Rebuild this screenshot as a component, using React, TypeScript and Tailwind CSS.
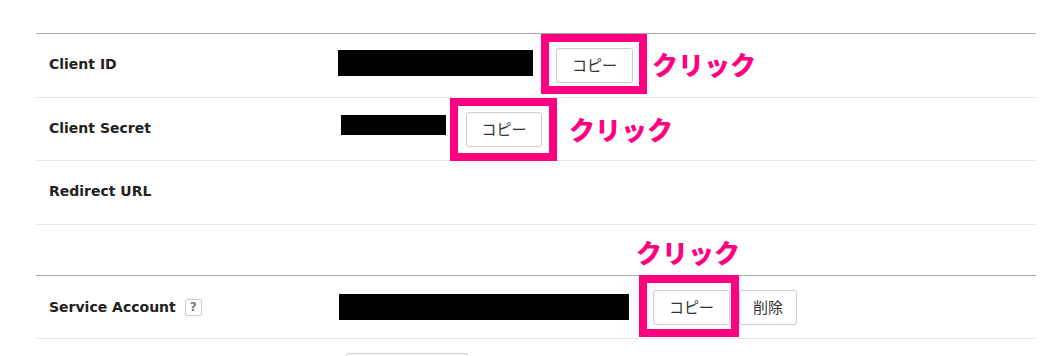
const label = "font-['DejaVu_Sans',sans-serif] text-[14px] font-bold text-[#222]";
const btn =
  "flex h-[35px] items-center justify-center rounded-[3px] border border-[#ccc] bg-white font-['Noto_Sans_CJK_JP',sans-serif] text-[15px] text-[#333]";
const frame = "box-border flex border-[8px] border-[#ff0080] bg-white";
const note =
  "font-['Noto_Sans_CJK_JP',sans-serif] text-[26px] font-black leading-none text-[#ff0080] whitespace-nowrap";

export default function App() {
  return (
    <div className="h-[356px] w-[1050px] overflow-hidden bg-white">
      <div className="ml-[36px] mt-[33px] w-[1000px] border-t border-[#aaa]">
        {/* Client ID */}
        <div className="flex h-[64px] items-center border-b border-[#e9e9e9]">
          <div className={`w-[302px] pl-[13px] -mt-[3px] ${label}`}>Client ID</div>
          <div className="h-[26px] w-[195px] -mt-[6px] bg-black" />
          <div className={`${frame} ml-[8px] -mt-[3px] h-[60px] w-[106px] pl-[7px] pt-[6px]`}>
            <button className={`${btn} w-[77px]`}>コピー</button>
          </div>
          <span className={`${note} ml-[5px] -mt-[3px]`}>クリック</span>
        </div>

        {/* Client Secret */}
        <div className="flex h-[63px] items-center border-b border-[#e9e9e9]">
          <div className={`w-[302px] pl-[13px] -mt-[2px] ${label}`}>Client Secret</div>
          <div className="ml-[3px] h-[20px] w-[105px] -mt-[9px] bg-black" />
          <div className={`${frame} ml-[4px] mt-[1px] h-[63px] w-[107px] pl-[8px] pt-[6px]`}>
            <button className={`${btn} w-[76px]`}>コピー</button>
          </div>
          <span className={`${note} ml-[12px]`}>クリック</span>
        </div>

        {/* Redirect URL */}
        <div className="flex h-[64px] items-center border-b border-[#e9e9e9]">
          <div className={`w-[302px] pl-[13px] -mt-[2px] ${label}`}>Redirect URL</div>
        </div>

        {/* empty row */}
        <div className="flex h-[51px] items-end border-b border-[#aaa] pb-[10px]">
          <div className="w-[302px]" />
          <span className={`${note} ml-[298px]`}>クリック</span>
        </div>

        {/* Service Account */}
        <div className="flex h-[63px] items-center border-b border-[#e9e9e9]">
          <div className={`flex w-[302px] items-center pl-[13px] ${label}`}>
            Service Account
            <span className="ml-[9px] flex h-[17px] w-[17px] items-center justify-center rounded-[2px] border border-[#ccc] text-[12px] font-bold text-[#777]">
              ?
            </span>
          </div>
          <div className="ml-[1px] h-[26px] w-[290px] bg-black" />
          <div className={`${frame} ml-[10px] -mt-[2px] h-[62px] w-[100px] pl-[6px] pt-[7px]`}>
            <button className={`${btn} w-[77px]`}>コピー</button>
          </div>
          <button className={`${btn} w-[58px]`}>削除</button>
        </div>

        {/* next row, cut off */}
        <div className="flex pt-[14px]">
          <div className="w-[302px]" />
          <button className={`${btn} ml-[8px] w-[122px]`} />
        </div>
      </div>
    </div>
  );
}
